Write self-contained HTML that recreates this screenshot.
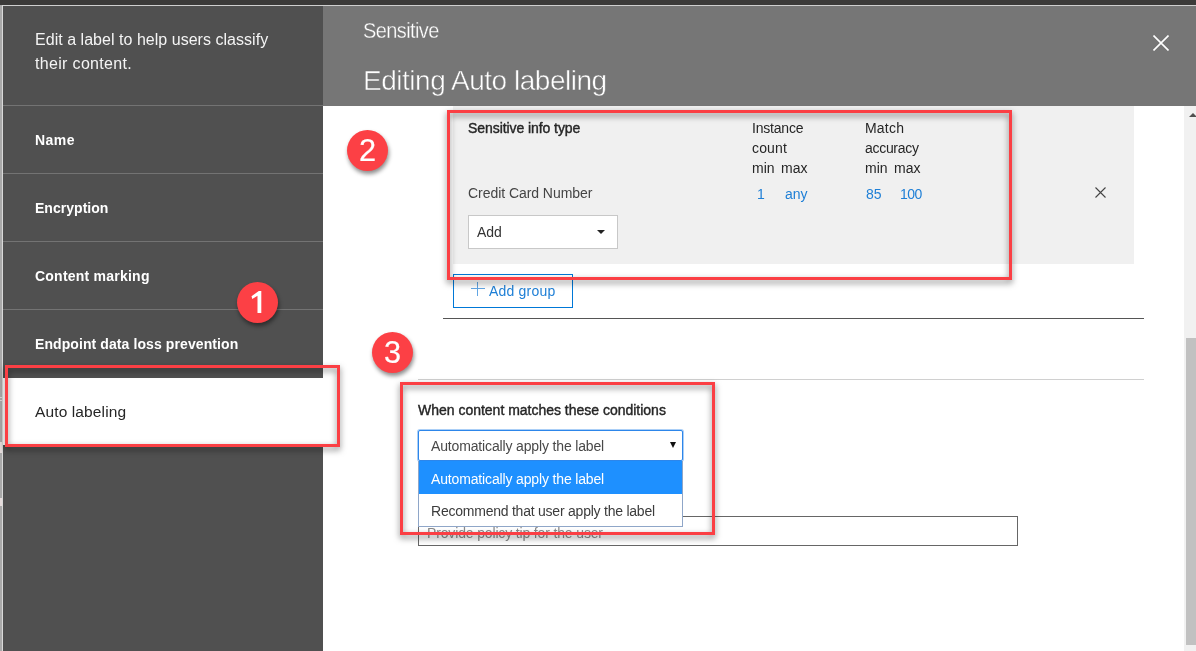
<!DOCTYPE html>
<html>
<head>
<meta charset="utf-8">
<title>Editing Auto labeling</title>
<style>
*{box-sizing:border-box;margin:0;padding:0}
html,body{width:1196px;height:651px;overflow:hidden;background:#fff}
body{font-family:"Liberation Sans",sans-serif;position:relative;color:#222}
.abs{position:absolute}
.t{position:absolute;white-space:nowrap;line-height:1;will-change:transform}
/* frame */
#topbar{left:0;top:0;width:1196px;height:5px;background:#3b3a39}
#topline{left:2px;top:5px;width:1194px;height:1px;background:#cfcfcf}
#leftstrip{left:0;top:5px;width:2px;height:646px;background:#a9a9a9}
#leftline{left:2px;top:5px;width:1px;height:646px;background:#d9d9d9}
/* sidebar */
#side{left:3px;top:6px;width:320px;height:645px;background:#505050}
.div{position:absolute;left:3px;width:320px;height:1px;background:#737373}
#active{left:3px;top:378px;width:320px;height:67px;background:#fff}
.nav{color:#fff;font-weight:bold;font-size:14px}
/* header */
#hdr{left:323px;top:6px;width:873px;height:100px;background:#767676}
/* red callouts */
.red{position:absolute;border:3px solid #fb3f44;filter:drop-shadow(0 3px 3px rgba(0,0,0,.52))}
.circ{position:absolute;width:41px;height:41px;border-radius:50%;background:#fc4045;box-shadow:1px 3px 4px rgba(0,0,0,.45);color:#fff;font-size:32px;line-height:41px;text-align:center;will-change:transform}
.circ span{display:inline-block;transform:translateX(-.3px) scaleX(.96);-webkit-text-stroke:.2px #fff}
/* panel */
#panel{left:453px;top:106px;width:681px;height:158px;background:#f0f0f0}
.h{font-size:14px;color:#262626}
.sb{-webkit-text-stroke:.4px #262626}
.lt{-webkit-text-stroke:.5px #767676}
.b{color:#1e7fd6;font-size:14px}
</style>
</head>
<body>
<div class="abs" id="topbar"></div>
<div class="abs" id="leftstrip"></div>
<div class="abs" id="topline"></div>
<div class="abs" id="leftline"></div>
<div class="abs" style="left:0;top:397px;width:2px;height:1px;background:#d8d8d8"></div><div class="abs" style="left:0;top:400px;width:2px;height:1px;background:#d8d8d8"></div>
<div class="abs" style="left:0;top:442px;width:2px;height:11px;background:#e6dcdc"></div><div class="abs" style="left:0;top:498px;width:2px;height:8px;background:#e6dcdc"></div>

<div class="abs" id="side"></div>
<div class="t" style="left:35px;top:32px;font-size:16px;color:#f4f4f4;letter-spacing:.03px">Edit a label to help users classify</div>
<div class="t" style="left:35px;top:56px;font-size:16px;color:#f4f4f4;letter-spacing:.33px">their content.</div>
<div class="div" style="top:105px"></div>
<div class="div" style="top:173px"></div>
<div class="div" style="top:241px"></div>
<div class="div" style="top:309px"></div>
<div class="t nav" style="left:35px;top:133px;letter-spacing:.45px">Name</div>
<div class="t nav" style="left:35px;top:201px;letter-spacing:.03px">Encryption</div>
<div class="t nav" style="left:35px;top:269px;letter-spacing:.23px">Content marking</div>
<div class="t nav" style="left:35px;top:337px;letter-spacing:.09px">Endpoint data loss prevention</div>
<div class="abs" id="active"></div>
<div class="t" style="left:35px;top:404px;font-size:15.5px;color:#262626;letter-spacing:.12px">Auto labeling</div>

<div class="abs" id="hdr"></div>
<div class="t" style="left:363px;top:21px;font-size:20px;color:#fff;letter-spacing:-.6px;-webkit-text-stroke:.3px #767676;transform:scaleY(1.07);transform-origin:0 84.6%">Sensitive</div>
<div class="t lt" style="left:363px;top:67px;font-size:28px;color:#fff;letter-spacing:-.48px">Editing Auto labeling</div>
<svg class="abs" style="left:1153px;top:35px" width="16" height="16" viewBox="0 0 16 16"><path d="M0.5 0.5L15.5 15.5M15.5 0.5L0.5 15.5" stroke="#fff" stroke-width="1.6" fill="none"/></svg>

<!-- group panel -->
<div class="abs" id="panel"></div>
<div class="t h sb" style="left:468px;top:121px;letter-spacing:-.07px">Sensitive info type</div>
<div class="t h" style="left:752px;top:121px;letter-spacing:-.2px">Instance</div>
<div class="t h" style="left:752px;top:141px;letter-spacing:.16px">count</div>
<div class="t h" style="left:752px;top:161px">min</div><div class="t h" style="left:781px;top:161px">max</div>
<div class="t h" style="left:865px;top:121px;letter-spacing:.2px">Match</div>
<div class="t h" style="left:865px;top:141px;letter-spacing:-.3px">accuracy</div>
<div class="t h" style="left:865px;top:161px">min</div><div class="t h" style="left:894px;top:161px">max</div>
<div class="t" style="left:468px;top:186px;font-size:14px;color:#444;letter-spacing:-.05px">Credit Card Number</div>
<div class="t b" style="left:756.5px;top:187px">1</div>
<div class="t b" style="left:785px;top:187px">any</div>
<div class="t b" style="left:866px;top:187px">85</div>
<div class="t b" style="left:899.5px;top:187px;letter-spacing:-.5px">100</div>
<svg class="abs" style="left:1095px;top:187px" width="11" height="11" viewBox="0 0 11 11"><path d="M0.5 0.5L10.5 10.5M10.5 0.5L0.5 10.5" stroke="#444" stroke-width="1.1" fill="none"/></svg>
<div class="abs" style="left:468px;top:215px;width:150px;height:34px;background:#fff;border:1px solid #c8c8c8"></div>
<div class="t" style="left:477px;top:225px;font-size:14px;color:#333">Add</div>
<div class="abs" style="left:597px;top:230px;width:0;height:0;border-left:4px solid transparent;border-right:4px solid transparent;border-top:4px solid #222"></div>

<!-- add group -->
<div class="abs" style="left:453px;top:274px;width:120px;height:34px;border:1px solid #0078d7;background:#fff"></div>
<svg class="abs" style="left:471px;top:282px" width="14" height="14" viewBox="0 0 14 14"><path d="M6.5 0V14M0 6.5H14" stroke="#62a6e4" stroke-width="1" fill="none"/></svg>
<div class="t b" style="left:489px;top:284px;letter-spacing:.2px">Add group</div>
<div class="abs" style="left:443px;top:318px;width:701px;height:1px;background:#555"></div>
<div class="abs" style="left:418px;top:379px;width:726px;height:1px;background:#d0d0d0"></div>

<!-- lower section -->
<div class="t h sb" style="left:418px;top:403px;letter-spacing:-.01px">When content matches these conditions</div>
<div class="abs" style="left:418px;top:516px;width:600px;height:30px;border:1px solid #666;background:#fff"></div>
<div class="t" style="left:426.5px;top:526px;font-size:14px;color:#8a8a8a;letter-spacing:-.15px">Provide policy tip for the user</div>
<div class="abs" style="left:418px;top:430px;width:265px;height:31px;border:1px solid #2d86ea;border-radius:2px;background:#fff;box-shadow:0 0 0 1px rgba(45,134,234,.4)"></div>
<div class="t" style="left:431px;top:439px;font-size:14px;color:#484848;letter-spacing:-.15px">Automatically apply the label</div>
<div class="abs" style="left:670px;top:442px;width:0;height:0;border-left:3.5px solid transparent;border-right:3.5px solid transparent;border-top:6px solid #111"></div>
<div class="abs" style="left:418px;top:461px;width:265px;height:66px;border:1px solid #8fa6c8;border-top:none;background:#fff"></div>
<div class="abs" style="left:419px;top:461px;width:263px;height:33px;background:#1e90ff"></div>
<div class="t" style="left:431px;top:472px;font-size:14px;color:#fff;letter-spacing:-.15px">Automatically apply the label</div>
<div class="t" style="left:431px;top:504px;font-size:14px;color:#3c3c3c;letter-spacing:-.23px">Recommend that user apply the label</div>

<!-- scrollbar -->
<div class="abs" style="left:1184px;top:106px;width:12px;height:545px;background:#f1f1f1"></div>
<div class="abs" style="left:1186px;top:338px;width:10px;height:307px;background:#c1c1c1"></div>
<div class="abs" style="left:1189px;top:113px;width:0;height:0;border-left:4px solid transparent;border-right:4px solid transparent;border-bottom:4px solid #505050"></div>

<!-- red callouts -->
<div class="red" style="left:5px;top:365px;width:335px;height:82px"></div>
<div class="red" style="left:447px;top:110px;width:565px;height:170px"></div>
<div class="red" style="left:400px;top:382px;width:315px;height:153px"></div>
<div class="circ" style="left:237px;top:282px"><svg style="position:absolute;left:0;top:0" width="41" height="41" viewBox="0 0 41 41"><path d="M24.3 9V31H20.5V13.7L15.3 17.1L14.5 14.3L21.8 9Z" fill="#fff"/></svg></div>
<div class="circ" style="left:347px;top:130px"><span>2</span></div>
<div class="circ" style="left:372px;top:332px"><span>3</span></div>
</body>
</html>
